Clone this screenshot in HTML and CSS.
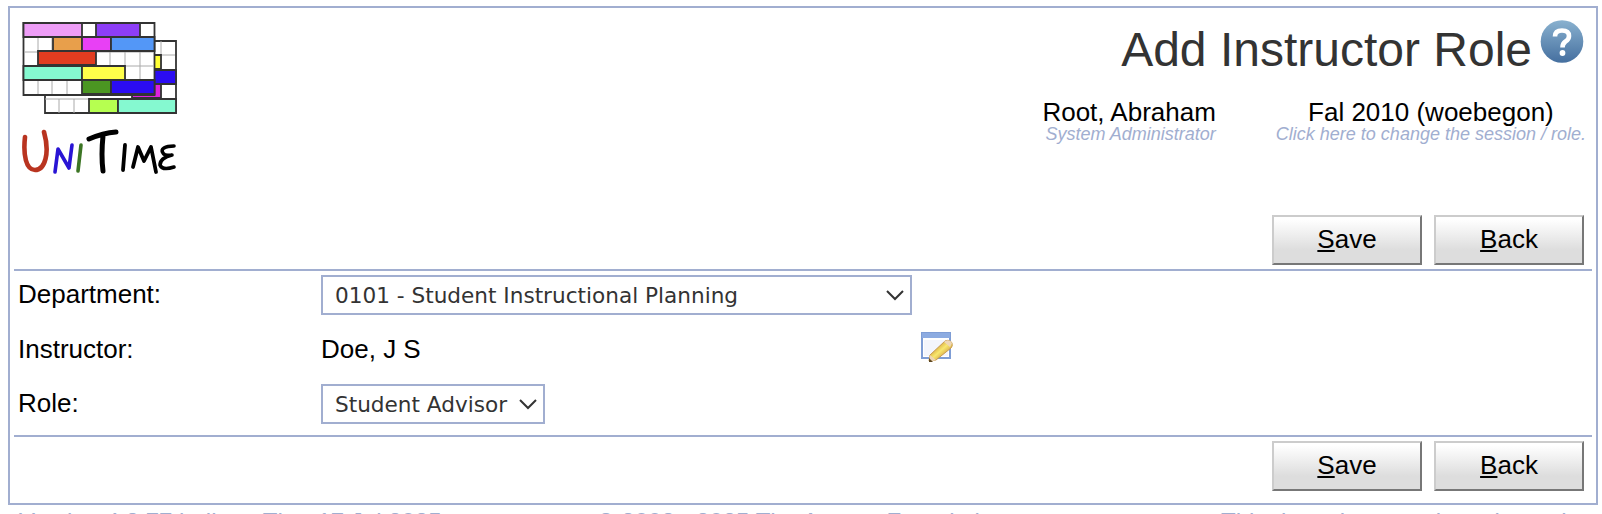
FILE: index.html
```html
<!DOCTYPE html>
<html lang="en">
<head>
<meta charset="utf-8">
<title>Add Instructor Role</title>
<link rel="stylesheet" href="styles.css">
</head>
<body>
<main class="panel">
  <header class="header">
    <svg class="logo" width="158" height="158" viewBox="0 0 158 158" role="img" aria-label="UniTime">
      <g stroke="#333" stroke-width="1.8">
        <path fill="#fff" d="M23 19h131v72h-131z"/>
        <path fill="none" stroke="#aaa" stroke-width="1" d="M23 77h130M37 77v14M52 77v14M139 19v58M132 33h21"/>
        <path fill="#ffff35" d="M132 33h7v14h-7z"/>
        <path fill="#2b0cf3" d="M132 48h22v14H132z"/>
        <path fill="#df22df" d="M110 62h29v14h-29z"/>
        <path fill="#b6ff50" d="M67 77h29v14H67z"/>
        <path fill="#85f9d0" d="M96 77h58v14H96z"/>
        <path fill="#fff" d="M1.500 1h131v72h-131z"/>
        <path fill="none" stroke="#aaa" stroke-width="1" d="M2 15h130M2 30h130M2 44h130M2 58h130M16 16v28M30 16v14M16 58v14M30 58v14M45 58v14M88 30v14M103 30v28M118 30v28"/>
        <path fill="#ee9df7" d="M1.500 1H60v14H1.500z"/>
        <path fill="#8d3ef7" d="M74 1h44v14H74z"/>
        <path fill="#e89f4b" d="M31 15h29v14H31z"/>
        <path fill="#e840f5" d="M60 15h29v14H60z"/>
        <path fill="#5397f7" d="M89 15h43.500v14H89z"/>
        <path fill="#e13c20" d="M16 29h58v14H16z"/>
        <path fill="#85f9d0" d="M1.500 44H60v14H1.500z"/>
        <path fill="#ffff4a" d="M60 44h43v14H60z"/>
        <path fill="#4b9622" d="M60 58h29v14H60z"/>
        <path fill="#2b0cf3" d="M89 58h43.500v14H89z"/>
      </g>
      <g fill="none" stroke-linecap="round" stroke-linejoin="round">
        <path stroke="#b93420" stroke-width="4.600" d="M3 115C1 133 4 148 13 148C23 148 28 131 22 110"/>
        <path stroke="#2914d4" stroke-width="3.600" d="M33 150L36 127L47 146L50 123"/>
        <path stroke="#3c7524" stroke-width="3.600" d="M59 123L56 149"/>
        <path stroke="#000" stroke-width="5" d="M67 117Q81 111 94 110M81 114Q79 133 81 149"/>
        <path stroke="#000" stroke-width="3.800" d="M103 123L101 148M111 145L116 125L122 139L129 125L134 150"/>
        <path stroke="#000" stroke-width="3.600" d="M152 124C143 124 138 127 141 131C143 135 148 133 150 133C142 135 138 139 138 143C140 148 146 147 152 145"/>
      </g>
    </svg>
    <div class="heading">
      <div class="title-row">
        <h1 class="title">Add Instructor Role</h1>
        <svg class="help" width="44" height="46" viewBox="0 0 44 46">
          <defs><linearGradient id="help-blue" x2="0" y2="1"><stop stop-color="#89b1cf"/><stop offset="1" stop-color="#456f9f"/></linearGradient></defs>
          <circle cx="22" cy="22.500" r="21.300" fill="url(#help-blue)"/>
          <path d="M15 17.500Q15 11.500 22 11.500Q29 11.500 29 17Q29 20.500 25.500 22.500Q22.500 24.500 22.500 28.500" fill="none" stroke="#fff" stroke-width="4.600"/>
          <circle cx="22.500" cy="34" r="2.900" fill="#fff"/>
        </svg>
      </div>
      <div class="info">
        <div class="user"><div class="name">Root, Abraham</div><div class="hint">System Administrator</div></div>
        <div class="session"><div class="name">Fal 2010 (woebegon)</div><div class="hint">Click here to change the session / role.</div></div>
      </div>
    </div>
  </header>
  <div class="buttons"><button class="button"><u>S</u>ave</button><button class="button"><u>B</u>ack</button></div>
  <section class="form">
    <div class="label">Department:</div>
    <div class="select wide"><span class="value">0101 - Student Instructional Planning</span><svg class="arrow" width="18" height="11" viewBox="0 0 18 11"><path d="M1 1L9 9L17 1"/></svg></div>
    <div class="label">Instructor:</div>
    <div class="instructor"><span class="doe">Doe, J S</span>
      <svg class="edit" width="32" height="32" viewBox="0 0 32 32">
        <defs><linearGradient id="pencil" x1="0" x2="1" y1="0" y2="1"><stop offset=".2" stop-color="#c98c28"/><stop offset=".5" stop-color="#f8e76f"/><stop offset=".8" stop-color="#ca9136"/></linearGradient></defs>
        <path fill="#fff" stroke="#7e9dd5" stroke-width="2" d="M1 2h28v25H1z"/>
        <path fill="#8cabe1" d="M1 2h28v5H1z"/>
        <path fill="#f3f5fc" d="M3 9h24v16H3z"/>
        <path fill="url(#pencil)" stroke="#c79a50" d="M8 30L9 24L24 10Q29 8 31 12Q32 15 30 17L15 29z"/>
        <path fill="#eed6b6" d="M9 24l6 5-7 2zM24 10q5-2 7 2l-2 4-6-5z"/>
        <path fill="#5e4821" d="M8 27l4 4H8z"/>
      </svg>
    </div>
    <div class="label">Role:</div>
    <div class="select narrow"><span class="value">Student Advisor</span><svg class="arrow" width="18" height="11" viewBox="0 0 18 11"><path d="M1 1L9 9L17 1"/></svg></div>
  </section>
  <div class="buttons"><button class="button"><u>S</u>ave</button><button class="button"><u>B</u>ack</button></div>
</main>
<footer class="footer"><span>Version 4.8.77 built on Thu, 17 Jul 2025</span><span>© 2008 - 2025 The Apereo Foundation</span><span>This demo instance is registered to</span></footer>
</body>
</html>
```
FILE: styles.css
```css
* { box-sizing: border-box; }
html, body { height: 514px; overflow: hidden; }
body { margin: 0; padding: 6px 4px 0 8px; background: #fff; color: #000; font-family: "Liberation Sans", Arial, sans-serif; font-size: 26px; }
.panel { width: 1590px; height: 499px; border: 2px solid #a1aed0; padding: 0 4px; }
.header { display: flex; justify-content: space-between; height: 203px; padding: 14px 6px 0 8px; }
.logo { flex: none; }
.heading { display: flex; flex-direction: column; align-items: flex-end; }
.title-row { display: flex; height: 75px; padding-right: 2px; }
.title { margin: 0; font-size: 48px; font-weight: 400; line-height: 55px; color: #333; white-space: nowrap; }
.help { margin: -3px 0 0 8px; }
.info { display: flex; gap: 60px; white-space: nowrap; }
.user { text-align: right; }
.session { text-align: center; }
.name { font-size: 26px; line-height: 30px; }
.hint { font-size: 18px; line-height: 15px; color: #a1aed0; font-style: italic; }
.buttons { display: flex; justify-content: flex-end; gap: 12px; height: 58px; padding: 4px 8px 0 0; }
.button { width: 150px; height: 50px; padding: 0 0 2px; border: 2px solid; border-color: #ccc #777 #777 #ccc; background: linear-gradient(#fff 5%, #ddd 72%, #ddd); color: #000; font: 26px "Liberation Sans", Arial, sans-serif; }
.button u { text-decoration-thickness: 2px; text-underline-offset: 2px; }
.form { display: grid; grid-template-columns: 303px 1fr; grid-template-rows: 55px 54px 54px; height: 168px; padding: 4px 0 0 4px; border: solid #a1aed0; border-width: 2px 0; }
.label { line-height: 30px; padding-top: 4px; }
.select { display: flex; align-items: center; justify-content: space-between; height: 40px; padding: 0 6px 0 12px; border: 2px solid #a1aed0; }
.wide { width: 591px; }
.narrow { width: 224px; }
.value { color: #333; font: 21.6px "DejaVu Sans", Verdana, sans-serif; white-space: nowrap; }
.arrow { fill: none; stroke: #333; stroke-width: 2; }
.instructor { display: flex; justify-content: space-between; width: 632px; }
.doe { line-height: 30px; padding-top: 4px; }
.edit { margin-top: 1px; }
.footer { display: grid; grid-template-columns: 578px 624px 1fr; height: 9px; padding: 3px 0 0 11px; color: #a1aed0; font-size: 24px; line-height: 27px; overflow: hidden; white-space: nowrap; }
```
